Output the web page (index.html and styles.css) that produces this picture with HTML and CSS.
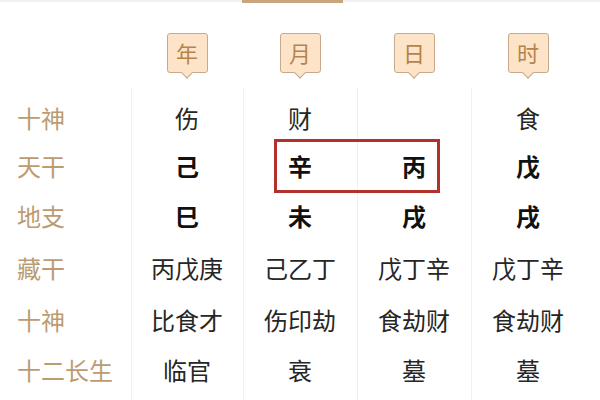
FILE: index.html
```html
<!DOCTYPE html>
<html lang="zh">
<head>
<meta charset="utf-8">
<link rel="stylesheet" href="styles.css">
</head>
<body>
<div class="topline"><div class="accent"></div></div>
<div class="head">
  <div></div>
  <div class="tagcell"><span class="tag">年</span></div>
  <div class="tagcell"><span class="tag">月</span></div>
  <div class="tagcell"><span class="tag">日</span></div>
  <div class="tagcell"><span class="tag">时</span></div>
</div>
<div class="chart">
  <div class="colline c2"></div>
  <div class="colline c3"></div>
  <div class="colline c4"></div>
  <div class="colline c5"></div>
  <div class="hl"></div>

  <div class="lab r2">十神</div>
  <div class="cell r2 c2">伤</div>
  <div class="cell r2 c3">财</div>
  <div class="cell r2 c4"></div>
  <div class="cell r2 c5">食</div>

  <div class="lab r3">天干</div>
  <div class="cell b r3 c2">己</div>
  <div class="cell b r3 c3">辛</div>
  <div class="cell b r3 c4">丙</div>
  <div class="cell b r3 c5">戊</div>

  <div class="lab r4">地支</div>
  <div class="cell b r4 c2">巳</div>
  <div class="cell b r4 c3">未</div>
  <div class="cell b r4 c4">戌</div>
  <div class="cell b r4 c5">戌</div>

  <div class="lab r5">藏干</div>
  <div class="cell r5 c2">丙戊庚</div>
  <div class="cell r5 c3">己乙丁</div>
  <div class="cell r5 c4">戊丁辛</div>
  <div class="cell r5 c5">戊丁辛</div>

  <div class="lab r6">十神</div>
  <div class="cell r6 c2">比食才</div>
  <div class="cell r6 c3">伤印劫</div>
  <div class="cell r6 c4">食劫财</div>
  <div class="cell r6 c5">食劫财</div>

  <div class="lab r7">十二长生</div>
  <div class="cell r7 c2">临官</div>
  <div class="cell r7 c3">衰</div>
  <div class="cell r7 c4">墓</div>
  <div class="cell r7 c5">墓</div>
</div>
</body>
</html>
```

FILE: styles.css
```css
html, body {
  margin: 0;
  padding: 0;
  background: #ffffff;
  font-family: "Noto Sans CJK SC", "Noto Sans", sans-serif;
  overflow: hidden;
}

.topline {
  height: 3px;
  border-top: 2px solid #f1f1f1;
  box-sizing: border-box;
  position: relative;
}
.accent {
  position: absolute;
  left: 242px;
  top: -2px;
  width: 101px;
  height: 3px;
  background: #c9a47c;
}

.head {
  display: grid;
  grid-template-columns: 131px 112px 114px 114px 114px;
  height: 85px;
  padding-top: 30px;
  box-sizing: border-box;
}
.tagcell {
  display: flex;
  justify-content: center;
}
.tag {
  position: relative;
  width: 41px;
  height: 40px;
  box-sizing: border-box;
  background: #fde4c9;
  border: 1.5px solid #c7aa8b;
  border-radius: 3px;
  color: #b5844b;
  font-size: 22px;
  line-height: 36px;
  text-align: center;
}
.tag::after {
  content: "";
  position: absolute;
  left: 50%;
  bottom: -5px;
  width: 7px;
  height: 7px;
  margin-left: -4.5px;
  background: #fde4c9;
  border-right: 1.5px solid #c7aa8b;
  border-bottom: 1.5px solid #c7aa8b;
  transform: rotate(45deg);
}

.chart {
  display: grid;
  grid-template-columns: 131px 112px 114px 114px 114px;
  grid-template-rows: 7px 45px 50px 50px 54px 50px 51px 20px;
}
.colline {
  grid-row: 1 / -1;
  border-left: 1.5px solid #f0f0f0;
}
.c2 { grid-column: 2; }
.c3 { grid-column: 3; }
.c4 { grid-column: 4; }
.c5 { grid-column: 5; }
.r2 { grid-row: 2; }
.r3 { grid-row: 3; }
.r4 { grid-row: 4; }
.r5 { grid-row: 5; }
.r6 { grid-row: 6; }
.r7 { grid-row: 7; }

.lab {
  grid-column: 1;
  display: flex;
  align-items: center;
  padding-left: 17px;
  font-size: 24px;
  color: #bb9c72;
}
.cell {
  display: flex;
  align-items: center;
  justify-content: center;
  font-size: 24px;
  color: #262626;
}
.cell.b {
  font-weight: 600;
  color: #111111;
}
.hl {
  grid-row: 3;
  grid-column: 3 / 5;
  margin: -1px 31px -3px 31px;
  border: 3px solid #b3302c;
}
```
